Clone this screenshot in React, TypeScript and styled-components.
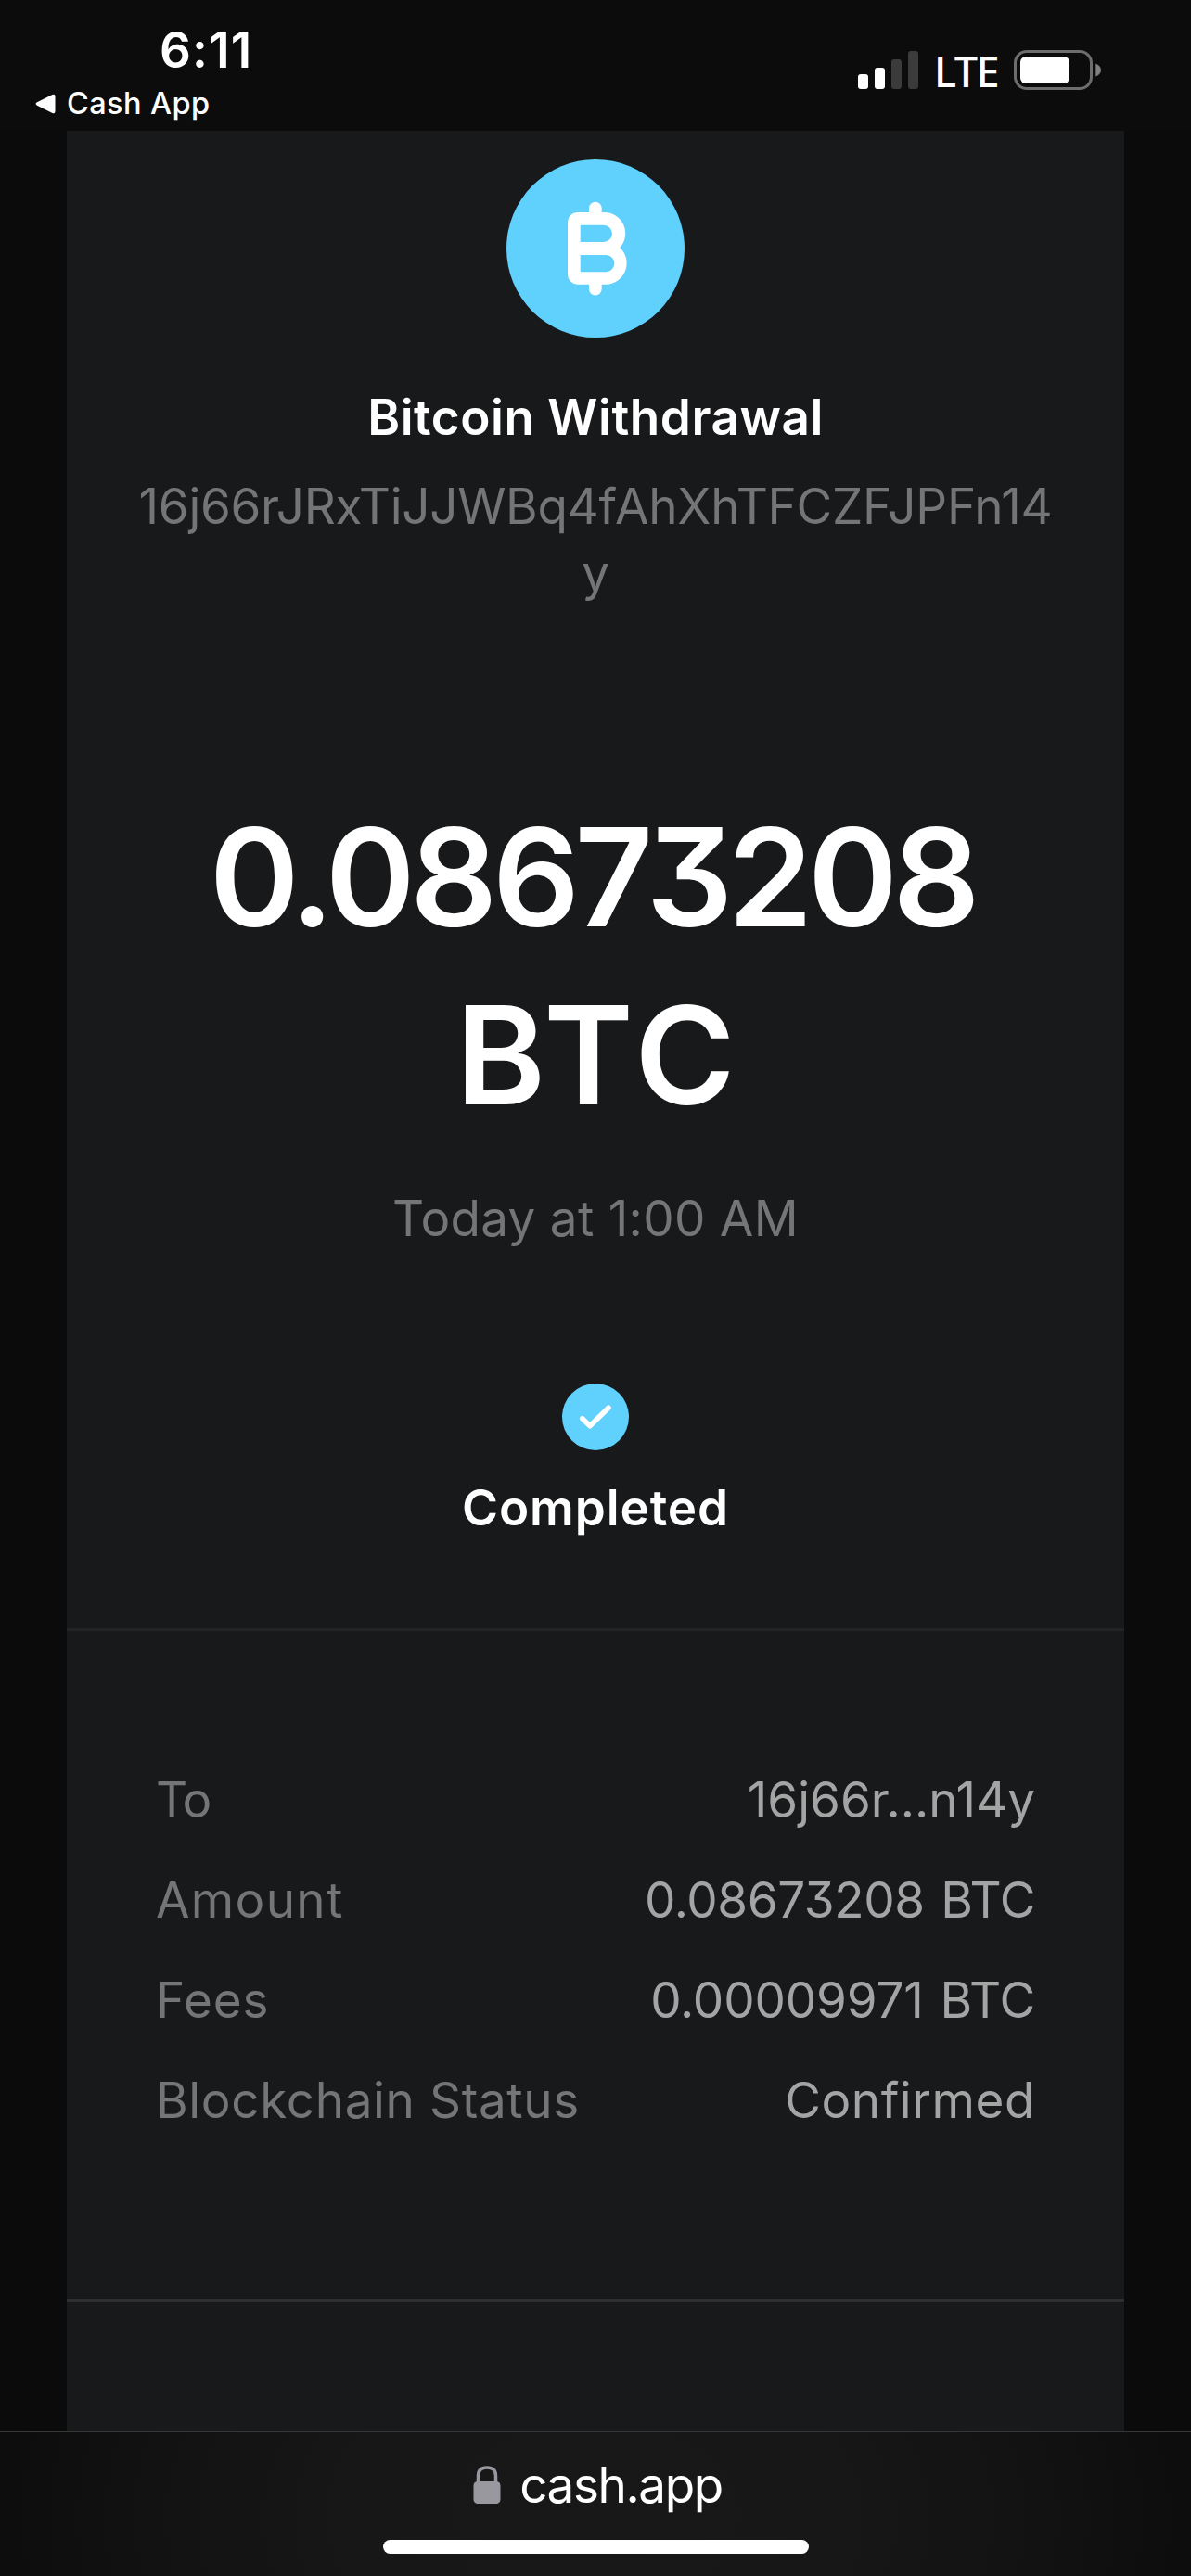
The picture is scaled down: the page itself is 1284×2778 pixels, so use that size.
import React from "react";
import styled, { createGlobalStyle } from "styled-components";

const GlobalStyle = createGlobalStyle`
  * { box-sizing: border-box; }
  body {
    margin: 0;
    background: #0b0b0b;
    font-family: Inter, "Liberation Sans", sans-serif;
    font-feature-settings: "calt" 0, "cv09" 1;
  }
`;

const Screen = styled.div`
  display: flex;
  flex-direction: column;
  width: 1284px;
  height: 2778px;
  overflow: hidden;
  background: #0b0b0b;
`;

const StatusBar = styled.header`
  display: flex;
  justify-content: space-between;
  flex: none;
  height: 141px;
  padding: 0 97px 0 38px;
  color: #fff;
  background: #0c0c0c;
`;

const StatusLeft = styled.div`
  display: flex;
  flex-direction: column;
`;

const Clock = styled.time`
  margin: 22px 0 0 134px;
  font-size: 53px;
  font-weight: 600;
  line-height: 64px;
  letter-spacing: 1.2px;
`;

const BackLink = styled.a`
  display: flex;
  align-items: center;
  gap: 12px;
  margin-top: 6px;
  font-size: 32.5px;
  font-weight: 500;
  line-height: 40px;
  letter-spacing: 0.4px;
`;

const StatusRight = styled.div`
  display: flex;
  align-items: flex-start;
  padding-top: 54px;
`;

const Signal = styled.div`
  display: flex;
  align-items: flex-end;
  gap: 7px;
  height: 42px;
`;

const SignalBar = styled.span<{ $height: number; $active?: boolean }>`
  width: 11px;
  height: ${(p) => p.$height}px;
  border-radius: 3px;
  background: ${(p) => (p.$active ? "#fff" : "#3b3b3b")};
`;

const Network = styled.span`
  width: 83px;
  padding-left: 17px;
  margin-right: 20px;
  font-family: "Noto Sans", "Open Sans", sans-serif;
  font-size: 45px;
  font-weight: 500;
  line-height: 46px;
  letter-spacing: -1.5px;
`;

const Card = styled.main`
  flex: none;
  width: 1140px;
  height: 2481px;
  margin: 0 auto;
  background: #18191b;
`;

const Summary = styled.section`
  display: flex;
  flex-direction: column;
  align-items: center;
  height: 1618px;
  padding-top: 31px;
  border-bottom: 3px solid #232426;
  text-align: center;
`;

const Coin = styled.svg`
  flex: none;
  width: 192px;
  height: 192px;
`;

const Heading = styled.h1<{ $top: number; $spacing: number }>`
  margin: ${(p) => p.$top}px 0 0;
  color: #fff;
  font-size: 53px;
  font-weight: 600;
  line-height: 72px;
  letter-spacing: ${(p) => p.$spacing}px;
`;

const Address = styled.p`
  width: 996px;
  margin: 24px 0 0;
  color: #747577;
  font-size: 53px;
  line-height: 72px;
  letter-spacing: -0.3px;
  word-break: break-all;
`;

const Amount = styled.div`
  display: flex;
  flex-direction: column;
  align-items: center;
  margin-top: 196px;
  color: #fff;
  font-size: 147px;
  font-weight: 600;
  line-height: 192px;
`;

const AmountDigits = styled.span`
  padding-right: 7px;
  letter-spacing: -5.4px;
`;

const AmountUnit = styled.span`
  padding-left: 6px;
  letter-spacing: 6px;
`;

const Timestamp = styled.p`
  margin: 44px 0 0;
  color: #747577;
  font-size: 53px;
  line-height: 72px;
  letter-spacing: 0.3px;
`;

const Badge = styled.svg`
  flex: none;
  width: 72px;
  height: 72px;
  margin-top: 142px;
`;

const Details = styled.dl`
  height: 723px;
  margin: 0;
  padding: 128px 96px 0;
  border-bottom: 3px solid #2e2f31;
`;

const Row = styled.div`
  display: flex;
  justify-content: space-between;
  height: 108px;
  font-size: 53px;
  line-height: 108px;
`;

const Label = styled.dt<{ $spacing?: number }>`
  color: #747577;
  letter-spacing: ${(p) => p.$spacing ?? 0}px;
`;

const Value = styled.dd<{ $spacing?: number }>`
  margin: 0;
  color: #a3a4a4;
  letter-spacing: ${(p) => p.$spacing ?? 0}px;
  word-spacing: 3px;
`;

const Toolbar = styled.footer`
  display: flex;
  flex-direction: column;
  align-items: center;
  flex: 1;
  border-top: 1px solid #363737;
  background: radial-gradient(ellipse 680px 460px at 50% 60%, #181818 0%, #171717 40%, #111 75%, #0c0c0d 100%);
`;

const Site = styled.div`
  display: flex;
  align-items: center;
  gap: 20px;
  height: 64px;
  margin-top: 25px;
  padding-left: 5px;
  color: #fff;
  font-size: 53px;
  line-height: 64px;
  letter-spacing: -1.4px;
`;

const HomeIndicator = styled.div`
  width: 459px;
  height: 15px;
  margin-top: 27px;
  border-radius: 8px;
  background: #fff;
`;

const details = [
  { label: "To", value: "16j66r...n14y", labelSpacing: -1.5, valueSpacing: 0 },
  { label: "Amount", value: "0.08673208 BTC", labelSpacing: 1.3, valueSpacing: -0.4 },
  { label: "Fees", value: "0.00009971 BTC", labelSpacing: 0.8, valueSpacing: -0.15 },
  { label: "Blockchain Status", value: "Confirmed", labelSpacing: 0.65, valueSpacing: 0.55 },
];

export default function App() {
  return (
    <Screen>
      <GlobalStyle />
      <StatusBar>
        <StatusLeft>
          <Clock>6:11</Clock>
          <BackLink>
            <svg width="22" height="22" viewBox="0 0 22 22">
              <path d="M2 9.3 18.5 1Q21.5 0 21.5 3V19Q21.5 22 18.5 21L2 12.7Q-.8 11 2 9.3Z" fill="#fff" />
            </svg>
            Cash App
          </BackLink>
        </StatusLeft>
        <StatusRight>
          <Signal>
            <SignalBar $height={16} $active />
            <SignalBar $height={23} $active />
            <SignalBar $height={32} />
            <SignalBar $height={41} />
          </Signal>
          <Network>LTE</Network>
          <svg width="94" height="43" viewBox="0 0 94 43">
            <rect x="1.5" y="1.5" width="82" height="40" rx="12.5" fill="none" stroke="#6d6d6d" strokeWidth="3" />
            <rect x="7" y="7" width="53" height="29" rx="6" fill="#fff" />
            <path d="M88.3 14.5Q94 17 94 21.5T88.3 28.5Z" fill="#808080" />
          </svg>
        </StatusRight>
      </StatusBar>

      <Card>
        <Summary>
          <Coin viewBox="0 0 192 192">
            <circle cx="96" cy="96" r="96" fill="#60d0fd" />
            <g fill="#fff">
              <path
                fillRule="evenodd"
                d="M76.5 57H105A22.7 22.7 0 0 1 122.3 95A22.9 22.9 0 0 1 107.5 134.7H76.5A10.5 10.5 0 0 1 66 124.2V67.5A10.5 10.5 0 0 1 76.5 57ZM79.7 70.7V89H104.8A9.15 9.15 0 0 0 104.8 70.7ZM79.7 103V121.2H107.3A9.1 9.1 0 0 0 107.3 103Z"
              />
              <rect x="89" y="45.7" width="13.7" height="22" rx="6.85" />
              <rect x="89" y="124.5" width="13.7" height="22" rx="6.85" />
            </g>
          </Coin>
          <Heading $top={50} $spacing={0.55}>Bitcoin Withdrawal</Heading>
          <Address>16j66rJRxTiJJWBq4fAhXhTFCZFJPFn14y</Address>
          <Amount>
            <AmountDigits>0.08673208</AmountDigits>
            <AmountUnit>BTC</AmountUnit>
          </Amount>
          <Timestamp>Today at 1:00 AM</Timestamp>
          <Badge viewBox="0 0 72 72">
            <circle cx="36" cy="36" r="36" fill="#60d0fd" />
            <path d="M21.8 37.8 30 45.800 50 26.2" fill="none" stroke="#fff" strokeWidth="5.6" strokeLinecap="round" strokeLinejoin="round" />
          </Badge>
          <Heading $top={26} $spacing={0.9}>Completed</Heading>
        </Summary>
        <Details>
          {details.map((item) => (
            <Row key={item.label}>
              <Label $spacing={item.labelSpacing}>{item.label}</Label>
              <Value $spacing={item.valueSpacing}>{item.value}</Value>
            </Row>
          ))}
        </Details>
      </Card>

      <Toolbar>
        <Site>
          <svg width="30" height="42" viewBox="0 0 30 42">
            <rect x="0.5" y="17" width="29" height="24" rx="4.5" fill="#99989f" />
            <path d="M5.5 18V11Q5.5 2 15 2T24.5 11V18" fill="none" stroke="#99989f" strokeWidth="3.5" />
          </svg>
          cash.app
        </Site>
        <HomeIndicator />
      </Toolbar>
    </Screen>
  );
}
